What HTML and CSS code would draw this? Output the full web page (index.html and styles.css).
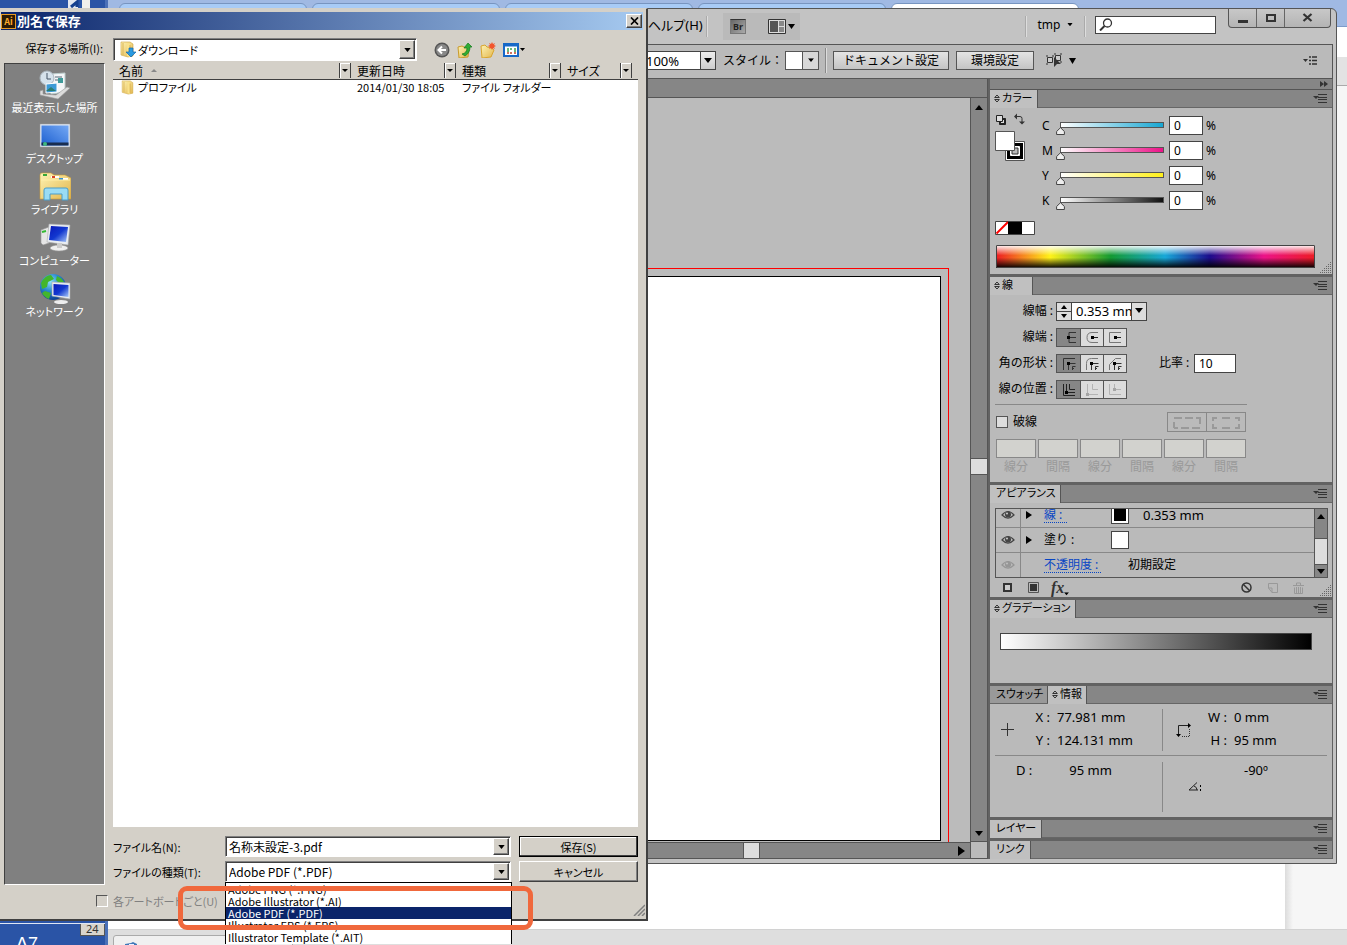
FILE: index.html
```
<!DOCTYPE html>
<html lang="ja">
<head>
<meta charset="utf-8">
<title>別名で保存</title>
<link rel="stylesheet" href="styles.css">
</head>
<body>
<svg class="defs" aria-hidden="true">
  <defs>
    <linearGradient id="folder" x1="0" y1="0" x2="1" y2="1"><stop offset="0" stop-color="#fdf3b4"/><stop offset="1" stop-color="#e3b64c"/></linearGradient>
    <linearGradient id="screen" x1="0" y1="0" x2="1" y2="1"><stop offset="0" stop-color="#0a18b8"/><stop offset=".5" stop-color="#1238d0"/><stop offset="1" stop-color="#a8c8f8"/></linearGradient>
    <linearGradient id="desk" x1="0" y1="1" x2="1" y2="0"><stop offset="0" stop-color="#1c5fd0"/><stop offset="1" stop-color="#74a8f4"/></linearGradient>
    <radialGradient id="globe" cx=".4" cy=".3" r=".7"><stop offset="0" stop-color="#8fe0f8"/><stop offset=".5" stop-color="#2a8ad0"/><stop offset="1" stop-color="#0c3f92"/></radialGradient>
    <linearGradient id="hue"><stop offset="0" stop-color="#ed1c24"/><stop offset=".17" stop-color="#fff21a"/><stop offset=".36" stop-color="#149a32"/><stop offset=".53" stop-color="#18a8d8"/><stop offset=".67" stop-color="#1c0c8c"/><stop offset=".84" stop-color="#ec1388"/><stop offset="1" stop-color="#ed1c24"/></linearGradient>
    <linearGradient id="shade" x1="0" y1="0" x2="0" y2="1"><stop offset="0" stop-color="#fff"/><stop offset=".45" stop-color="#fff" stop-opacity="0"/><stop offset=".55" stop-color="#000" stop-opacity="0"/><stop offset="1" stop-color="#000"/></linearGradient>
    <symbol id="menu" viewBox="0 0 15 9"><path d="M0 2h6l-3 3z" fill="#333"/><path d="M5 .5h9M5 3.500h9M5 5.500h9M5 8.500h9" stroke="#333"/></symbol>
    <symbol id="updown" viewBox="0 0 6 9"><path d="M.7 3.500 3 1l2.300 2.500zM.7 5.500 3 8l2.300-2.500z" fill="none" stroke="#333"/></symbol>
    <symbol id="down" viewBox="0 0 8 6"><path d="M0 0h8L4 5z"/></symbol>
    <symbol id="eye" viewBox="0 0 14 10"><path d="M1 5Q7-2 13 5Q7 11 1 5z" fill="none" stroke="#444" stroke-width="1.200"/><circle cx="7" cy="4.500" r="3" fill="#444"/><circle cx="6" cy="3.500" r="1" fill="#ccc"/></symbol>
    <symbol id="grip" viewBox="0 0 12 12"><path d="M1 11.500h11M3 9.500h9M5 7.500h7M7 5.500h5M9 3.500h3M11 1.500h1" stroke="#666" stroke-dasharray="1 1"/></symbol>
    <symbol id="folderIcon" viewBox="0 0 16 17"><path d="M2 1h9l3 2v12l-5 1-7-2z" fill="url(#folder)" stroke="#cda23a" stroke-width=".6"/><path d="M8 2l3 1v13l-3-1z" fill="#f9e28a"/><path d="M4 2v12M11 4v11" stroke="#d9b152"/></symbol>
  </defs>
</svg>

<div class="backdrop">
  <div class="back-side">
    <svg class="back-logo" viewBox="0 0 26 8"><path d="M0 0h10v8H0z" fill="#e4e8f0"/><path d="M3 7l6-5v5" stroke="#15408f" stroke-width="3" fill="none"/><path d="M14 0h8v8h-8z" fill="#f1efec"/></svg>
    <div class="back-ruler"><span class="a7">A7</span><span class="mark">24</span></div>
  </div>
  <div class="back-browser">
    <div class="back-tabs"><span class="back-tab"></span><span class="back-tab"></span><span class="back-tab"></span><span class="back-tab"></span><span class="back-tab active"></span></div>
    <div class="back-address"></div>
    <div class="back-tools"></div>
    <div class="back-page"><div class="back-paper"></div><div class="back-margin"></div></div>
    <div class="back-foot"><div class="back-download"><svg width="16" height="9" viewBox="0 0 16 9"><path d="M1 3l6-1 2-1 4 2v6H1z" fill="#3f78b8"/><path d="M5 3h5v6H5z" fill="#eef"/></svg><span>adobe_illust</span></div></div>
  </div>
</div>

<main class="app">
  <header class="titlebar">
    <span class="help">ヘルプ(H)</span>
    <i class="rule"></i>
    <div class="title-tools">
      <button class="bridge" type="button">Br</button>
      <button class="arrange" type="button" aria-label="レイアウト"><svg width="27" height="15" viewBox="0 0 27 15"><path d="M.5.500h17v14H.5z" fill="#ddd" stroke="#333"/><path d="M2 2h8v11H2z" fill="#555"/><path d="M11 2h5v5h-5zM11 8h5v5h-5z" fill="#888"/><path d="M20 5h7l-3.500 5z"/></svg></button>
    </div>
    <span class="grow"></span>
    <i class="rule"></i>
    <button class="workspace" type="button">tmp <svg width="6" height="4" viewBox="0 0 8 6"><use href="#down"/></svg></button>
    <i class="rule"></i>
    <label class="search"><svg width="14" height="13" viewBox="0 0 14 13"><circle cx="8.500" cy="5" r="4" fill="none" stroke="#333" stroke-width="1.300"/><path d="M5.500 8 1 12.500" stroke="#333" stroke-width="2"/></svg><input type="text" aria-label="検索"></label>
    <div class="window-buttons">
      <button type="button" aria-label="最小化"><svg width="12" height="12"><path d="M1 8h10v3H1z" fill="#333"/></svg></button>
      <button type="button" aria-label="最大化"><svg width="12" height="12"><path d="M2 3h8v6H2z" fill="none" stroke="#333" stroke-width="2"/></svg></button>
      <button type="button" aria-label="閉じる"><svg width="12" height="12"><path d="M1.500 2l8 7M9.500 2l-8 7" stroke="#333" stroke-width="2.200"/></svg></button>
    </div>
  </header>

  <div class="control-bar">
    <div class="zoom-combo"><input type="text" value="100%" aria-label="不透明度"><button type="button" aria-label="値を選択"><svg width="8" height="6"><use href="#down"/></svg></button></div>
    <span class="style-label">スタイル：</span>
    <div class="style-combo"><i></i><button type="button" aria-label="スタイルを選択"><svg width="6" height="5" viewBox="0 0 8 6"><use href="#down"/></svg></button></div>
    <i class="rule"></i>
    <button class="plain" type="button">ドキュメント設定</button>
    <button class="plain prefs" type="button">環境設定</button>
    <button class="similar" type="button" aria-label="共通オブジェクトを選択"><svg width="32" height="15" viewBox="0 0 32 15"><path d="M2.500 4.500h5v5h-5zM10.500 2.500h5v5h-5z" fill="#ccc" stroke="#333"/><path d="M1 3h2M1 11h2M7 3h2M9 1h2M15 1h2M15 9h2" stroke="#333"/><path d="M9 4v10l3-3 4 0z" fill="#333"/><path d="M24 5h7l-3.500 6z"/></svg></button>
    <span class="grow"></span>
    <button class="bar-menu" type="button" aria-label="メニュー"><svg width="14" height="9" viewBox="0 0 14 9"><path d="M0 3h5l-2.500 3z" fill="#333"/><path d="M6 1h2M9 1h5M6 4.500h2M9 4.500h5M6 8h2M9 8h5" stroke="#333" stroke-width="1.500"/></svg></button>
  </div>

  <div class="workarea">
    <section class="document">
      <div class="doc-tabs"></div>
      <div class="doc-view">
        <div class="canvas"><div class="bleed"><div class="artboard"></div></div></div>
        <div class="vscroll"><svg width="10" height="6" viewBox="0 0 8 6"><path d="M0 5h8L4 0z"/></svg><i></i><svg width="10" height="6" viewBox="0 0 8 6"><use href="#down"/></svg></div>
      </div>
      <div class="hscroll-row"><div class="hscroll"><i></i><svg width="7" height="10" viewBox="0 0 7 10"><path d="M0 0v10l7-5z"/></svg></div><div class="corner"></div></div>
    </section>

    <aside class="dock">
      <div class="dock-top"><svg width="8" height="6"><path d="M0 0v6l4-3zM4 0v6l4-3z" fill="#333"/></svg></div>

      <section class="panel">
        <div class="panel-head"><h2 class="tab"><svg width="6" height="9"><use href="#updown"/></svg>カラー</h2><svg class="menu" width="15" height="9"><use href="#menu"/></svg></div>
        <div class="panel-body color-body">
          <div class="color-main">
            <svg width="32" height="50" viewBox="0 0 32 50">
              <path d="M4.500 5.500h6v6h-6z" fill="#222" stroke="#222"/><path d="M6 7h3v3H6z" fill="#ddd"/><path d="M1.500 2.500h6v6h-6z" fill="#ddd" stroke="#222"/>
              <path d="M21 3.500h4q2 0 2 2V9" fill="none" stroke="#333"/><path d="M19 3.500l3-3v6zM24 8.500h6l-3 3z" fill="#333"/>
              <path d="M10.500 28.500h19v19h-19z" fill="#fff" stroke="#555"/><path d="M12 30h16v16H12z" fill="#000"/><path d="M15.500 33.500h9v9h-9z" fill="#fff" stroke="#fff"/><path d="M17 35h6v6h-6z" fill="#bbb" stroke="#333"/>
              <path d="M.5 18.500h19v19H.5z" fill="#fff" stroke="#555"/>
            </svg>
            <div class="channels">
              <div class="channel"><label for="c">C</label><div class="slider cyan"><i></i><input id="c" type="range" value="0"></div><input class="field" type="text" value="0" aria-label="C %"><span>%</span></div>
              <div class="channel"><label for="m">M</label><div class="slider magenta"><i></i><input id="m" type="range" value="0"></div><input class="field" type="text" value="0" aria-label="M %"><span>%</span></div>
              <div class="channel"><label for="y">Y</label><div class="slider yellow"><i></i><input id="y" type="range" value="0"></div><input class="field" type="text" value="0" aria-label="Y %"><span>%</span></div>
              <div class="channel"><label for="k">K</label><div class="slider black"><i></i><input id="k" type="range" value="0"></div><input class="field" type="text" value="0" aria-label="K %"><span>%</span></div>
            </div>
          </div>
          <svg class="quick" width="40" height="14" viewBox="0 0 40 14"><path d="M.5.500h39v13H.5z" fill="#fff" stroke="#444"/><path d="M1.500 12.500 13 1" stroke="#f00" stroke-width="2"/><path d="M13 1h14v12H13z"/></svg>
          <div class="spectrum-row"><svg class="spectrum" viewBox="0 0 319 23" preserveAspectRatio="none"><path d="M0 0h319v23H0z" fill="url(#hue)"/><path d="M0 0h319v23H0z" fill="url(#shade)"/><path d="M.5.500h318v22H.5z" fill="none" stroke="#444"/></svg><svg class="grip" width="12" height="12"><use href="#grip"/></svg></div>
        </div>
      </section>

      <section class="panel">
        <div class="panel-head"><h2 class="tab wide"><svg width="6" height="9"><use href="#updown"/></svg>線</h2><svg class="menu" width="15" height="9"><use href="#menu"/></svg></div>
        <div class="panel-body stroke-body">
          <div class="stroke-row"><label for="weight">線幅 :</label><div class="weight"><span class="spin"><button type="button" aria-label="増やす"><svg width="6" height="4" viewBox="0 0 6 4"><path d="M0 4h6L3 0z"/></svg></button><button type="button" aria-label="減らす"><svg width="6" height="4" viewBox="0 0 6 4"><path d="M0 0h6L3 4z"/></svg></button></span><input id="weight" type="text" value="0.353 mm"><button type="button" aria-label="線幅を選択"><svg width="8" height="6"><use href="#down"/></svg></button></div></div>
          <div class="stroke-row"><span class="lab">線端 :</span><div class="segments">
            <button class="on" type="button" aria-label="線端なし"><svg viewBox="0 0 22 17"><path d="M18 3.500h-7v10h7M11 8.500h7" fill="none" stroke="#333"/><path d="M9 7h3v3H9z"/></svg></button>
            <button type="button" aria-label="丸型線端"><svg viewBox="0 0 22 17"><path d="M17 3.500h-6q-5 0-5 5t5 5h6" fill="none" stroke="#777"/><path d="M10 8.500h7" stroke="#222"/><path d="M10 7h3v3h-3z"/></svg></button>
            <button type="button" aria-label="突出線端"><svg viewBox="0 0 22 17"><path d="M17 3.500H5.500v10H17" fill="none" stroke="#777"/><path d="M10 8.500h7" stroke="#222"/><path d="M10 7h3v3h-3z"/></svg></button></div></div>
          <div class="stroke-row"><span class="lab">角の形状 :</span><div class="segments">
            <button class="on" type="button" aria-label="マイター結合"><svg viewBox="0 0 22 17"><path d="M5.500 15V3.500H17M10.500 15V8.500h7M14.500 15v-3.500h3M14 13.500h2" fill="none" stroke="#333"/><path d="M9 7h3v3H9z"/></svg></button>
            <button type="button" aria-label="ラウンド結合"><svg viewBox="0 0 22 17"><path d="M5.500 15V8.500q0-5 5-5H17" fill="none" stroke="#777"/><path d="M10.500 15V8.500h7M14.500 15v-3.500h3M14 13.500h2" fill="none" stroke="#333"/><path d="M9 7h3v3H9z"/></svg></button>
            <button type="button" aria-label="ベベル結合"><svg viewBox="0 0 22 17"><path d="M5.500 15V9.500l6-6H17" fill="none" stroke="#777"/><path d="M10.500 15V8.500h7M14.500 15v-3.500h3M14 13.500h2" fill="none" stroke="#333"/><path d="M9 7h3v3H9z"/></svg></button></div>
            <label class="ratio" for="ratio">比率 :</label><input id="ratio" class="field ratio-field" type="text" value="10"></div>
          <div class="stroke-row"><span class="lab">線の位置 :</span><div class="segments">
            <button class="on" type="button" aria-label="中央"><svg viewBox="0 0 22 17"><path d="M5.500 3v11.500H17M8.500 3v8.500H17M11.500 3v5.500H17" fill="none" stroke="#222"/><path d="M7 10h3v3H7z"/></svg></button>
            <button class="dim" type="button" aria-label="内側" disabled><svg viewBox="0 0 22 17"><path d="M6.500 3v10.500H17M11.500 3v5.500H17" fill="none" stroke="#777"/><path d="M5 12h3v3H5z" fill="#555"/></svg></button>
            <button class="dim" type="button" aria-label="外側" disabled><svg viewBox="0 0 22 17"><path d="M5.500 3v10.500H17M10.500 3v5.500H17" fill="none" stroke="#777"/><path d="M9 7h3v3H9z" fill="#555"/></svg></button></div></div>
          <div class="dash-area">
            <div class="dash-head"><label class="dash"><input type="checkbox">破線</label>
              <div class="dash-buttons"><button type="button" aria-label="線分と間隔を維持" disabled><svg width="30" height="13" viewBox="0 0 30 13"><path d="M2 12V6M2 2h8M13 2h8M24 2h4v6M2 12h4M9 12h8M20 12h8" fill="none" stroke="#999" stroke-width="2"/></svg></button><button type="button" aria-label="角に揃える" disabled><svg width="30" height="13" viewBox="0 0 30 13"><path d="M6 2H2v3M2 8v4h4M11 2h8M11 12h8M24 2h4v3M28 8v4h-4" fill="none" stroke="#999" stroke-width="2"/></svg></button></div></div>
            <div class="dash-fields">
              <label><input type="text" disabled>線分</label><label><input type="text" disabled>間隔</label><label><input type="text" disabled>線分</label><label><input type="text" disabled>間隔</label><label><input type="text" disabled>線分</label><label><input type="text" disabled>間隔</label>
            </div>
          </div>
        </div>
      </section>

      <section class="panel">
        <div class="panel-head"><h2 class="tab">アピアランス</h2><svg class="menu" width="15" height="9"><use href="#menu"/></svg></div>
        <div class="panel-body look-body">
          <div class="look-box">
            <div class="look-list">
              <div class="look-row"><span class="eye"><svg width="14" height="10"><use href="#eye"/></svg></span><svg class="open" width="6" height="8"><path d="M0 0v8l6-4z"/></svg><a href="#">線 :</a><i class="chip ink"></i><span>0.353 mm</span></div>
              <div class="look-row"><span class="eye"><svg width="14" height="10"><use href="#eye"/></svg></span><svg class="open" width="6" height="8"><path d="M0 0v8l6-4z"/></svg><b>塗り :</b><i class="chip"></i></div>
              <div class="look-row opacity"><span class="eye faint"><svg width="14" height="10"><use href="#eye"/></svg></span><a href="#">不透明度 :</a><span>初期設定</span></div>
            </div>
            <div class="look-scroll"><svg width="8" height="5" viewBox="0 0 8 5"><path d="M0 5h8L4 0z"/></svg><i></i><svg width="8" height="5" viewBox="0 0 8 5"><path d="M0 0h8L4 5z"/></svg></div>
          </div>
          <div class="look-foot">
            <svg width="11" height="11"><path d="M2 2h7v7H2z" fill="#ccc" stroke="#333" stroke-width="2"/></svg>
            <svg width="11" height="11"><path d="M.5.500h10v10H.5z" fill="none" stroke="#555"/><path d="M2 2h7v7H2z" fill="#333"/></svg>
            <span class="fx">fx<svg width="5" height="4" viewBox="0 0 8 6"><use href="#down"/></svg></span>
            <span class="grow"></span>
            <svg width="11" height="11"><circle cx="5.500" cy="5.500" r="4.500" fill="none" stroke="#333" stroke-width="1.500"/><path d="M2 2l7 7" stroke="#333" stroke-width="1.500"/></svg>
            <svg width="11" height="11"><path d="M1.500 6V1.500h9v9H5M1.500 6H5v4.500z" fill="none" stroke="#999"/></svg>
            <svg width="11" height="12"><path d="M0 3.500h11M3.500 3V1h4v2M1.500 5.500v6h8v-6M3.500 5v6M5.500 5v6M7.500 5v6" fill="none" stroke="#999"/></svg>
            <svg class="grip" width="12" height="12"><use href="#grip"/></svg>
          </div>
        </div>
      </section>

      <section class="panel">
        <div class="panel-head"><h2 class="tab"><svg width="6" height="9"><use href="#updown"/></svg>グラデーション</h2><svg class="menu" width="15" height="9"><use href="#menu"/></svg></div>
        <div class="panel-body grad-body"><div class="ramp"></div></div>
      </section>

      <section class="panel">
        <div class="panel-head"><h2 class="tab idle">スウォッチ</h2><h2 class="tab"><svg width="6" height="9"><use href="#updown"/></svg>情報</h2><svg class="menu" width="15" height="9"><use href="#menu"/></svg></div>
        <div class="panel-body info-body">
          <div class="info-row">
            <div class="info-cell"><svg width="14" height="14"><path d="M6.500 0v13M0 6.500h13" stroke="#333"/></svg><dl><dt>X :</dt><dd>77.981 mm</dd><dt>Y :</dt><dd>124.131 mm</dd></dl></div>
            <div class="info-cell"><svg width="16" height="16" viewBox="0 0 16 16"><path d="M2.500 14V3.500H13" fill="none" stroke="#222"/><path d="M0 12h5l-2.500 3zM12 1v5l3-2.500z"/><path d="M13.500 7v7.500H6" fill="none" stroke="#333" stroke-dasharray="1 1"/></svg><dl><dt>W :</dt><dd>0 mm</dd><dt>H :</dt><dd>95 mm</dd></dl></div>
          </div>
          <div class="info-row lower">
            <div class="info-cell distance"><span>D :</span><span>95 mm</span></div>
            <div class="info-cell angle"><span>-90º</span><svg width="14" height="9" viewBox="0 0 14 9"><path d="M9 .5 1 8h9M6 4q3 1 3 4" fill="none" stroke="#222"/><path d="M12 3h1v2h-1zM12 7h1v2h-1z"/></svg></div>
          </div>
        </div>
      </section>

      <section class="panel"><div class="panel-head"><h2 class="tab pad">レイヤー</h2><svg class="menu" width="15" height="9"><use href="#menu"/></svg></div></section>
      <section class="panel"><div class="panel-head"><h2 class="tab pad">リンク</h2><svg class="menu" width="15" height="9"><use href="#menu"/></svg></div></section>
    </aside>
  </div>
</main>

<form class="dialog">
  <header class="dialog-title"><span class="ai">Ai</span><h1>別名で保存</h1><button class="close" type="button" aria-label="閉じる"><svg width="9" height="8" viewBox="0 0 9 8"><path d="M1 .5l7 7M8 .5l-7 7" stroke="#000" stroke-width="1.700"/></svg></button></header>
  <div class="dialog-grid">
    <label class="lookin" for="place">保存する場所(I):</label>
    <div class="lookbar">
      <div class="combo"><svg width="18" height="17" viewBox="0 0 18 17"><use href="#folderIcon" width="16" height="17"/><path d="M10 7h4v4h3l-5 5-5-5h3z" fill="#2a9ae0" stroke="#1466a8" stroke-width=".7"/></svg><select id="place"><option>ダウンロード</option></select><span class="drop"><svg width="7" height="4" viewBox="0 0 8 5"><path d="M0 0h8L4 5z"/></svg></span></div>
      <button class="tool" type="button" aria-label="戻る"><svg width="16" height="16"><circle cx="8" cy="8" r="7.500" fill="#555"/><circle cx="8" cy="8" r="6" fill="#888"/><path d="M12 8H5M8 4.500 4.500 8 8 11.500" stroke="#fff" stroke-width="2" fill="none"/></svg></button>
      <button class="tool" type="button" aria-label="上の階層へ"><svg width="16" height="16"><path d="M1 5l4-1 2 1 5 1-1 9-9 1z" fill="url(#folder)" stroke="#c99b2c"/><path d="M5 12q5-1 5-6H7l4-5 4 4h-2q0 6-5 9z" fill="#2fae34" stroke="#167a1c" stroke-width=".7"/></svg></button>
      <button class="tool" type="button" aria-label="新しいフォルダー"><svg width="16" height="16"><path d="M1 4l4-1 2 2 5 1 2 2-3 7-9 1z" fill="url(#folder)" stroke="#d9a52c"/><path d="M12 0l1 2 2-1-1 2 2 1-2 1 1 2-2-1-1 2-1-2-2 1 1-2-2-1 2-1-1-2 2 1z" fill="#f2552c"/></svg></button>
      <button class="tool" type="button" aria-label="表示"><svg width="22" height="14"><path d="M1 1h14v12H1z" fill="#fff" stroke="#1768c8" stroke-width="2"/><path d="M1 2h14" stroke="#1768c8" stroke-width="3"/><path d="M4 6h2M7 6h2M11 6h2M4 8h2M11 8h2" stroke="#38a050" stroke-width="1.500"/><path d="M4 10h2M7 10h2M11 10h2" stroke="#c04428" stroke-width="1.500"/><path d="M17 5h5l-2.500 3z"/></svg></button>
    </div>

    <nav class="places">
      <button type="button"><svg width="32" height="30" viewBox="0 0 32 30"><path d="M12 4l14-1v19l-14 2z" fill="#f4f6f8" stroke="#bcc"/><path d="M16 7h7M16 10h4" stroke="#567"/><path d="M19 8h5v5h-5z" fill="#3f9a9a"/><circle cx="8" cy="8" r="7" fill="#d5e2ec" stroke="#a9b4bd"/><path d="M8 3v6h4" stroke="#456" fill="none"/><path d="M7 14l11-1v9L7 23z" fill="#3c9ad6" stroke="#fff"/><path d="M7 21l5-4 5 4z" fill="#2b7d6f"/><path d="M1 21l3-1v4l13 1 11-8 3 1-12 11-18-4z" fill="#dcdcdc" stroke="#999" stroke-width=".6"/></svg>最近表示した場所</button>
      <button type="button"><svg width="32" height="30" viewBox="0 0 32 30"><path d="M1 3h30v23H1z" fill="#dfe8f4" stroke="#999" stroke-width=".5"/><path d="M2.500 4.500h27v20h-27z" fill="url(#desk)"/><path d="M2.500 21.500h27v3h-27z" fill="#182d50"/><circle cx="6" cy="23" r="2" fill="#3fb880"/></svg>デスクトップ</button>
      <button type="button"><svg width="32" height="30" viewBox="0 0 32 30"><path d="M1 3q0-2 2-2h9l3 2h11l6 3v21H1z" fill="url(#folder)" stroke="#c99b35" stroke-width=".6"/><path d="M4 2h4v2H4z" fill="#38a838"/><path d="M12 4h8v2h-8z" fill="#fff"/><path d="M13 4h3v2h-3z" fill="#d84324"/><path d="M20 6h9v2h-9z" fill="#fff"/><path d="M20 6h4v2h-4z" fill="#3290d0"/><path d="M2 8h29" stroke="#fff0a8"/><path d="M5 28V18q0-2 2-2h20q2 0 2 2v10h-6v-6H11v6z" fill="#9adcf4" stroke="#4a9cc8"/></svg>ライブラリ</button>
      <button type="button"><svg width="32" height="30" viewBox="0 0 32 30"><path d="M2 7l8-3v16l-6 2-2-2z" fill="#e6e6e6" stroke="#999" stroke-width=".6"/><path d="M3 9l4-1" stroke="#3b3" stroke-width="2"/><path d="M10 1l21 1-2 20-21-3z" fill="#e9edf2" stroke="#aaa" stroke-width=".6"/><path d="M12 3l17 1-2 15-17-2z" fill="url(#screen)"/><ellipse cx="20" cy="25" rx="9" ry="3" fill="#eee" stroke="#999" stroke-width=".6"/><path d="M18 20h5v5h-5z" fill="#ccc"/></svg>コンピューター</button>
      <button type="button"><svg width="32" height="30" viewBox="0 0 32 30"><circle cx="14" cy="13" r="13" fill="url(#globe)"/><path d="M2 9Q6 1 12 1l3 4-6 3-1 5-5 2zM18 2q5 2 7 6l-5 1-3-3zM6 17l6 2-2 6q-5-2-7-6z" fill="#43b62c"/><path d="M13 8l18 1v16l-18-3z" fill="#e9edf2" stroke="#aaa" stroke-width=".6"/><path d="M14.500 10l15 1v12l-15-2z" fill="url(#screen)"/><ellipse cx="22" cy="28" rx="7" ry="2" fill="#eee"/></svg>ネットワーク</button>
    </nav>

    <div class="content">
      <div class="files">
        <table>
          <colgroup><col class="col-name"><col class="col-date"><col class="col-type"><col class="col-size"><col></colgroup>
          <thead><tr>
            <th><div>名前 <svg class="asc" width="6" height="3"><path d="M0 3h6L3 0z" fill="#888"/></svg><button type="button" aria-label="名前の絞り込み"><svg width="6" height="3" viewBox="0 0 6 3"><path d="M0 0h6L3 3z"/></svg></button></div></th>
            <th><div>更新日時<button type="button" aria-label="更新日時の絞り込み"><svg width="6" height="3" viewBox="0 0 6 3"><path d="M0 0h6L3 3z"/></svg></button></div></th>
            <th><div>種類<button type="button" aria-label="種類の絞り込み"><svg width="6" height="3" viewBox="0 0 6 3"><path d="M0 0h6L3 3z"/></svg></button></div></th>
            <th><div>サイズ<button type="button" aria-label="サイズの絞り込み"><svg width="6" height="3" viewBox="0 0 6 3"><path d="M0 0h6L3 3z"/></svg></button></div></th>
            <th></th></tr></thead>
          <tbody><tr><td class="fname"><svg width="15" height="15" viewBox="0 0 16 17"><use href="#folderIcon"/></svg>プロファイル</td><td>2014/01/30 18:05</td><td>ファイル フォルダー</td><td></td><td></td></tr></tbody>
        </table>
      </div>
      <div class="fields">
        <label for="fname">ファイル名(N):</label>
        <div class="combo"><input id="fname" type="text" value="名称未設定-3.pdf"><button class="drop" type="button" aria-label="履歴"><svg width="7" height="4" viewBox="0 0 8 5"><path d="M0 0h8L4 5z"/></svg></button></div>
        <button class="act default" type="submit">保存(S)</button>
        <label for="ftype">ファイルの種類(T):</label>
        <div class="combo type-combo"><select id="ftype"><option>Adobe PDF (*.PDF)</option></select><span class="drop"><svg width="7" height="4" viewBox="0 0 8 5"><path d="M0 0h8L4 5z"/></svg></span>
          <ul class="options"><li>Adobe PNG (*.PNG)</li><li>Adobe Illustrator (*.AI)</li><li class="selected">Adobe PDF (*.PDF)</li><li>Illustrator EPS (*.EPS)</li><li>Illustrator Template (*.AIT)</li></ul>
        </div>
        <button class="act" type="button">キャンセル</button>
      </div>
    </div>

    <div class="dialog-foot"><label><input type="checkbox" disabled>各アートボードごと(U)</label><svg class="resize" width="12" height="12"><path d="M1 12 12 1M5 12l7-7M9 12l3-3" stroke="#808080" stroke-width="1.500"/></svg></div>
  </div>
  <div class="highlight"></div>
</form>
</body>
</html>
```

FILE: styles.css
```
* { box-sizing: border-box; }
html, body { height: 100%; }
body { margin: 0; overflow: hidden; position: relative; background: #f6f6f6; color: #000; font: 12px/16px "Noto Sans", "Noto Sans CJK JP", sans-serif; }
button, input, select { font: inherit; color: inherit; margin: 0; padding: 0; border-radius: 0; }
button { display: flex; align-items: center; justify-content: center; background: none; border: 0; white-space: nowrap; }
input, select { min-width: 0; outline: 0; }
svg { display: block; flex: none; }
h1, h2, dl, dd, ul { margin: 0; padding: 0; }
.defs { position: absolute; width: 0; height: 0; }
.grow { flex: 1; }

/* Windows behind */
.backdrop { display: flex; height: 100%; }
.back-side { width: 108px; flex: none; display: flex; flex-direction: column; justify-content: space-between; background: #2a54a6; border-right: 3px solid #4a70b8; }
.back-logo { width: 26px; height: 8px; margin-left: 68px; }
.back-ruler { display: flex; justify-content: space-between; align-items: flex-start; height: 22px; overflow: hidden; border-top: 1px solid #dfe6f3; color: #fff; }
.a7 { margin: 10px 0 0 16px; font: 18px/20px "Liberation Sans", sans-serif; }
.mark { width: 25px; padding-left: 5px; height: 12px; line-height: 10px; background: #d8d4cc; color: #333; border: 1px solid #555; border-top: 0; font-size: 11px; }
.back-browser { flex: 1; min-width: 0; display: flex; flex-direction: column; }
.back-tabs { height: 27px; flex: none; display: flex; gap: 5px; padding: 3px 0 0 11px; background: #a0b9e3; border-bottom: 1px solid #7d9bc9; }
.back-tab { width: 188px; background: #a8cbf6; border: 1px solid #7895c0; border-radius: 6px 6px 0 0; }
.back-tab.active { background: #fff; }
.back-address { height: 30px; flex: none; background: #fff; }
.back-tools { height: 29px; flex: none; background: #e3e3e3; border-bottom: 1px solid #aaa; }
.back-page { flex: 1; display: flex; background: #f6f6f6; }
.back-paper { flex: 1; background: #fff; }
.back-margin { width: 62px; background: linear-gradient(to right, #dcdcdc, #f6f6f6 8px); }
.back-foot { height: 16px; flex: none; display: flex; background: #dedede; border-top: 1px solid #d2d2d2; overflow: hidden; }
.back-download { width: 180px; height: 26px; margin: 5px 0 0 5px; padding: 5px 0 0 10px; display: flex; gap: 10px; border: 1px solid #aaa; background: #f0f0f0; border-radius: 3px; line-height: 20px; }

/* Application window */
.app { position: absolute; left: 4px; right: 10px; top: 8px; bottom: 81px; display: flex; flex-direction: column; padding: 0 3px 4px 0; background: #c3c3c3; border: 1px solid #555; border-radius: 0 6px 0 0; }
.titlebar { height: 35px; flex: none; display: flex; align-items: center; padding-left: 643px; }
.help { width: 58px; padding-bottom: 4px; font-size: 13px; white-space: nowrap; font-feature-settings: "palt"; }
.rule { width: 2px; height: 21px; flex: none; background: #aaa; border-right: 1px solid #ddd; }
.title-tools { display: flex; align-items: center; gap: 22px; height: 27px; margin-left: 15px; padding: 0 5px 0 7px; background: #bababa; }
.bridge { width: 16px; height: 15px; background: linear-gradient(135deg, #666, #aaa); border: 1px solid #777; border-top-color: #333; font-size: 9px; font-weight: bold; color: #222; }
.workspace { gap: 7px; width: 57px; padding-bottom: 4px; }
.search { display: flex; align-items: center; width: 121px; height: 18px; margin: 0 12px 4px 9px; padding-left: 3px; border: 1px solid #444; background: #fff; }
.search input { flex: 1; border: 0; background: none; }
.window-buttons { align-self: flex-start; display: flex; height: 19px; border: 1px solid #555; border-top: 0; border-radius: 0 0 4px 4px; margin-right: 2px; background: linear-gradient(#c8c8c8, #b4b4b4); }
.window-buttons button { width: 28px; border-right: 1px solid #666; }
.window-buttons button:last-child { width: 45px; border: 0; }
.control-bar { height: 35px; flex: none; display: flex; align-items: center; padding: 0 15px 2px 639px; background: #bababa; border: 1px solid #555; border-left: 0; }
.zoom-combo { display: flex; width: 72px; height: 19px; border: 1px solid #444; background: #fff; }
.zoom-combo input { flex: 1; border: 0; padding-left: 1px; font-size: 13px; }
.zoom-combo button { width: 15px; border-left: 1px solid #444; background: linear-gradient(#eee, #ccc); }
.style-label { margin-left: 7px; width: 62px; white-space: nowrap; }
.style-combo { display: flex; width: 34px; height: 19px; border: 1px solid #555; background: #fff; }
.style-combo i { flex: 1; }
.style-combo button { width: 16px; border-left: 1px solid #555; background: #d8d8d8; }
.control-bar .rule { margin: 0 6px; height: 25px; background: #888; }
.plain { width: 116px; height: 19px; border: 1px solid #555; background: linear-gradient(#e4e4e4, #c4c4c4); }
.prefs { width: 78px; margin-left: 7px; }
.similar { margin-left: 11px; }

.workarea { flex: 1; min-height: 0; display: flex; }
.document { flex: 1; min-width: 0; display: flex; flex-direction: column; border-right: 1px solid #555; }
.doc-tabs { height: 19px; flex: none; background: #868686; border-bottom: 1px solid #555; }
.doc-view { flex: 1; display: flex; min-height: 0; }
.canvas { flex: 1; padding: 170px 21px 0 0; background: #bbb; overflow: hidden; }
.bleed { height: 100%; padding: 7px 7px 1px 0; border-top: 1px solid #f00; border-right: 1px solid #f00; }
.artboard { height: 100%; background: #fff; border: 1px solid #000; }
.vscroll { width: 17px; display: flex; flex-direction: column; align-items: center; justify-content: space-between; padding: 7px 0 4px; background: #868686; border: 1px solid #555; border-width: 0 0 1px 1px; }
.vscroll i { width: 16px; height: 17px; margin-top: -10px; background: #ddd; border: 1px solid #555; border-width: 1px 0; }
.hscroll-row { display: flex; height: 17px; flex: none; }
.hscroll { flex: 1; display: flex; align-items: center; justify-content: space-between; padding: 0 5px 0 738px; background: #868686; border: 1px solid #555; border-left: 0; }
.hscroll i { width: 17px; height: 15px; background: #ddd; border: 1px solid #555; border-width: 0 1px; }
.corner { width: 16px; background: #bbb; border-bottom: 1px solid #555; }

/* Dock */
.dock { width: 345px; flex: none; display: flex; flex-direction: column; gap: 3px; padding: 0 1px 0 2px; background: #626262; }
.dock-top { height: 11px; margin-bottom: -3px; flex: none; display: flex; align-items: center; justify-content: flex-end; padding-right: 4px; background: #868686; border-bottom: 1px solid #555; }
.panel { flex: none; background: #bababa; }
.panel-head { display: flex; height: 18px; background: #868686; border-bottom: 1px solid #666; align-items: center; }
.tab { height: 18px; display: flex; align-items: center; gap: 2px; padding: 0 4px 1px 4px; background: #c0c0c0; border-right: 1px solid #555; font-size: 11px; line-height: 16px; font-weight: normal; white-space: nowrap; font-feature-settings: "palt"; }
.tab:first-child:not(:has(svg)) { padding-left: 6px; }
.tab.wide { padding-right: 19px; }
.tab.idle { background: #999; height: 17px; }
.menu { margin: 0 4px 0 auto; }
.field { height: 19px; border: 1px solid #444; background: #fff; padding-left: 4px; }

.color-body { min-height: 166px; padding: 8px 0 0 5px; }
.color-main { display: flex; }
.color-main > svg { margin-top: -3px; }
.channels { display: flex; flex-direction: column; gap: 6px; padding-left: 15px; }
.channel { display: flex; align-items: center; height: 19px; }
.channel label { width: 14px; }
.slider { position: relative; width: 112px; height: 17px; margin-right: 1px; }
.slider i { position: absolute; left: 4px; right: 4px; top: 5px; height: 6px; border: 1px solid #555; }
.slider input { position: absolute; inset: 10px 0 auto; width: 112px; height: 8px; appearance: none; background: none; }
.slider input::-webkit-slider-thumb { appearance: none; width: 9px; height: 8px; background: url("data:image/svg+xml,%3Csvg xmlns='http://www.w3.org/2000/svg' viewBox='0 0 9 8'%3E%3Cpath d='M4.5.7 8.400 4.500v3H.6v-3z' fill='%23eee' stroke='%23444'/%3E%3C/svg%3E"); }
.cyan i { background: linear-gradient(to right, #fff, #16a6d2); }
.magenta i { background: linear-gradient(to right, #fff, #ec1388); }
.yellow i { background: linear-gradient(to right, #fff, #fff01a); }
.black i { background: linear-gradient(to right, #fff, #111); }
.channel .field { width: 34px; }
.channel span { padding-left: 3px; }
.quick { margin-top: 11px; }
.spectrum-row { display: flex; align-items: flex-end; margin: 10px 1px 0 1px; }
.spectrum { flex: 1; height: 23px; margin-right: 4px; }
.grip { margin-bottom: -5px; }

.stroke-body { min-height: 187px; padding: 6px 86px 0 5px; }
.stroke-row { display: flex; align-items: center; height: 20px; margin-bottom: 6px; white-space: nowrap; }
.stroke-row > label:first-child, .lab { width: 58px; margin-right: 3px; text-align: right; }
.weight { display: flex; width: 91px; height: 19px; border: 1px solid #444; background: #fff; }
.weight > input { flex: 1; border: 0; padding-left: 4px; font-size: 13px; }
.weight > button { width: 15px; border-left: 1px solid #444; background: #ddd; }
.spin { width: 15px; display: flex; flex-direction: column; border-right: 1px solid #444; }
.spin button { flex: 1; background: #ddd; }
.spin button + button { border-top: 1px solid #444; }
.segments { display: flex; height: 19px; border: 1px solid #555; }
.segments button { width: 23px; background: #dcdcdc; }
.segments button + button { border-left: 1px solid #555; }
.segments button.on { background: #868686; }
.segments svg { width: 22px; height: 17px; }
.dim svg { opacity: .4; }
.ratio { margin-left: 32px; width: 35px; }
.ratio-field { width: 42px; }
.dash-area { border-top: 1px solid #888; padding: 7px 0 0 1px; margin-top: -1px; width: 252px; }
.dash-head { display: flex; justify-content: space-between; padding-right: 1px; }
.dash { display: flex; align-items: center; gap: 5px; }
.dash input { appearance: none; width: 12px; height: 12px; background: #ddd; border: 1px solid #555; }
.dash-buttons { display: flex; border: 1px solid #888; height: 20px; }
.dash-buttons button { width: 38px; }
.dash-buttons button + button { width: 39px; border-left: 1px solid #888; }
.dash-fields { display: flex; gap: 2px; margin-top: 7px; }
.dash-fields label { width: 40px; text-align: center; color: #999; line-height: 18px; }
.dash-fields input { display: block; width: 40px; height: 19px; border: 1px solid #888; background: #d2d2ce; }

.look-body { min-height: 94px; padding: 5px 1px 0 5px; }
.look-box { display: flex; height: 70px; margin-right: 3px; border: 1px solid #555; }
.look-list { flex: 1; display: flex; flex-direction: column; justify-content: flex-end; overflow: hidden; }
.look-row { display: flex; flex: none; align-items: center; height: 25px; border-top: 1px solid #888; }
.eye { width: 25px; height: 24px; display: flex; align-items: center; justify-content: center; border-right: 1px solid #888; }
.faint svg { opacity: .3; }
.open { margin: 0 12px 0 5px; }
.look-row a { color: #0645c4; text-decoration: none; border-bottom: 1px dotted #0645c4; line-height: 15px; }
.look-row b { font-weight: normal; width: 67px; }
.look-row .open + a { margin-right: 44px; width: 23px; white-space: nowrap; }
.chip { width: 18px; height: 18px; border: 1px solid #444; background: #fff; }
.ink { background: #000; box-shadow: inset 0 0 0 2px #fff; }
.chip + span { margin-left: 14px; font-size: 13px; }
.opacity a { margin: 0 27px 0 23px; width: 57px; white-space: nowrap; }
.look-scroll { width: 13px; display: flex; flex-direction: column; align-items: center; gap: 4px; padding: 5px 0 3px; background: #868686; border-left: 1px solid #555; }
.look-scroll svg:first-child { margin-bottom: auto; }
.look-scroll i { width: 12px; height: 27px; background: #ddd; border: 1px solid #555; border-width: 1px 0; }
.look-foot { display: flex; align-items: center; gap: 15px; height: 19px; padding-left: 7px; }
.fx { display: flex; align-items: flex-end; margin-left: -3px; font: italic bold 16px/16px "Liberation Serif", serif; color: #333; }
.look-foot .grip { margin: 0 0 -5px 0; }

.grad-body { min-height: 65px; padding: 15px 20px 0 10px; }
.ramp { height: 17px; border: 1px solid #444; background: linear-gradient(to right, #fff, #000); }

.info-body { min-height: 113px; padding: 5px 5px 0; font-size: 13px; }
.info-row { display: grid; grid-template-columns: 167px 1fr; }
.info-row + .info-row { border-top: 1px solid #888; margin-top: 4px; padding-top: 6px; }
.info-cell { display: flex; align-items: center; height: 42px; padding-left: 6px; gap: 15px; }
.info-cell + .info-cell { border-left: 1px solid #888; padding-left: 13px; }
.info-cell dl { display: grid; grid-template-columns: 20px 1fr; row-gap: 7px; margin-top: -3px; column-gap: 7px; white-space: nowrap; }
.info-cell dt { text-align: right; }
.lower .info-cell { height: 50px; align-items: flex-start; }
.distance { justify-content: flex-start; gap: 37px; }
.info-row .distance { padding-left: 21px; }
.info-row .angle { flex-direction: column; gap: 4px; padding-left: 25px; }
.angle span { padding-left: 56px; }
.tab.pad { padding: 0 5px 1px 8px; }

/* Save dialog */
.dialog { position: absolute; left: -3px; top: 8px; bottom: 24px; width: 651px; display: flex; flex-direction: column; padding: 3px; background: #d4d0c8; border: 1px solid #d4d0c8; border-right: 2px solid #404040; border-bottom: 2px solid #404040; font-family: "Noto Sans CJK JP", sans-serif; font-size: 11px; font-feature-settings: "palt"; }
.dialog-title { height: 18px; flex: none; display: flex; align-items: center; gap: 1px; padding-right: 1px; background: linear-gradient(to right, #0a246a, #a6caf0); }
.dialog-title h1 { flex: 1; font-size: 13px; line-height: 18px; color: #fff; }
.ai { width: 15px; height: 15px; background: #2b1a04; border: 1px solid #e79a22; color: #ffac2e; font-weight: bold; font-size: 9px; line-height: 13px; text-align: center; }
.close, .drop, .act { background: #d4d0c8; border: 1px solid; border-color: #fff #404040 #404040 #fff; box-shadow: inset -1px -1px #808080; }
.close { width: 16px; height: 14px; }
.dialog-grid { flex: 1; min-height: 0; display: grid; grid-template: 23px 1fr 29px / 101px 1fr; column-gap: 8px; row-gap: 2px; padding: 8px 5px 0 3px; }
.lookin { text-align: right; line-height: 20px; padding-right: 2px; white-space: nowrap; }
.lookbar { display: flex; align-items: center; gap: 7px; }
.lookbar .combo { width: 304px; height: 23px; margin-right: 10px; padding-left: 5px; }
.combo { display: flex; align-items: center; padding: 0; background: #fff; border: 1px solid; border-color: #808080 #fff #fff #808080; box-shadow: inset 1px 1px #404040; }
.combo input, .combo select { flex: 1; height: 17px; appearance: none; border: 0; background: none; padding-left: 3px; }
.lookbar select { padding-left: 1px; }
.combo .drop { width: 16px; align-self: stretch; margin: 1px; display: flex; align-items: center; justify-content: center; }
.tool { height: 18px; }
.places { display: flex; flex-direction: column; gap: 3px; padding-top: 4px; background: #808080; border: 1px solid #404040; border-right-color: #fff; border-bottom-color: #fff; }
.places button { flex-direction: column; height: 48px; color: #fff; line-height: 15px; }
.content { display: flex; flex-direction: column; min-width: 0; }
.files { flex: 1; background: #fff; }
.files table { width: 100%; table-layout: fixed; border-collapse: collapse; }
.col-name { width: 238px; }
.col-date, .col-type { width: 105px; }
.col-size { width: 71px; }
.files th { padding: 0; height: 16px; background: #d4d0c8; font-weight: normal; font-size: 12px; line-height: 14px; text-align: left; border-bottom: 1px solid #404040; }
.files th div { display: flex; align-items: center; padding-left: 6px; height: 15px; border-right: 1px solid #404040; }
.files th button { margin-left: auto; width: 11px; height: 15px; border-left: 1px solid #404040; box-shadow: inset 1px 1px #fff; }
.asc { margin-left: 8px; }
.files td { padding: 0 0 0 6px; height: 16px; line-height: 15px; white-space: nowrap; }
.files td.fname { display: flex; align-items: center; gap: 3px; padding-left: 7px; }
.fields { display: grid; grid-template-columns: 112px 286px 1fr; grid-auto-rows: 21px; gap: 4px 0; padding: 9px 0 3px; align-items: center; }
.fields label { white-space: nowrap; }
.fields .combo { height: 21px; font-size: 12px; }
.act { height: 21px; margin-left: 8px; }
.default { outline: 1px solid #000; outline-offset: -1px; border-color: #000; box-shadow: inset -1px -1px #404040, inset 1px 1px #fff; }
.type-combo { position: relative; }
.options { position: absolute; left: -1px; top: 20px; width: 287px; height: 62px; overflow: hidden; list-style: none; background: #fff; border: 1px solid #000; border-bottom: 0; font-size: 11px; line-height: 12px; }
.options li { padding-left: 2px; height: 12px; white-space: nowrap; }
.options .selected { background: #0a246a; color: #fff; }
.dialog-foot { grid-column: 1 / -1; display: flex; justify-content: space-between; padding: 4px 0 0 92px; }
.dialog-foot label { display: flex; align-items: center; gap: 5px; height: 20px; color: #808080; }
.dialog-foot input { appearance: none; width: 12px; height: 12px; border: 1px solid; border-color: #555 #fff #fff #555; }
.resize { align-self: flex-end; margin-right: -7px; }
.highlight { position: absolute; left: 180px; top: 877px; width: 355px; height: 44px; border: 5px solid #f0683c; border-radius: 9px; }
```
